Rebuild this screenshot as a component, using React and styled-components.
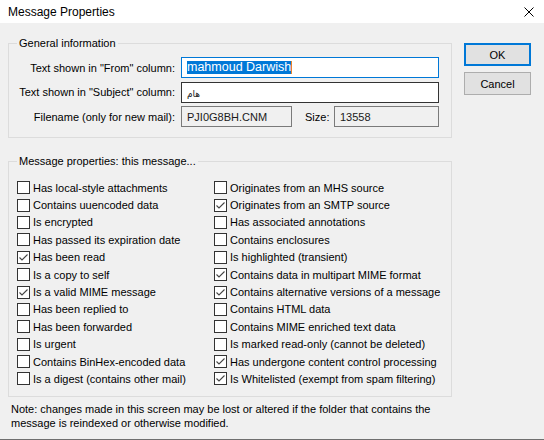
import React from 'react';
import styled, { createGlobalStyle } from 'styled-components';

const GlobalStyle = createGlobalStyle`
  html, body { margin: 0; padding: 0; background: #f0f0f0; }
  body {
    width: 544px;
    height: 440px;
    overflow: hidden;
    font-family: "Liberation Sans", Arial, sans-serif;
  }
`;

const Window = styled.div`
  width: 544px;
  height: 440px;
  box-sizing: border-box;
  display: flex;
  flex-direction: column;
  background: #f0f0f0;
  border-bottom: 1px solid #6f6f6f;
  color: #000;
  font-size: 11px;
  overflow: hidden;
`;

const TitleBar = styled.div`
  height: 23px;
  flex: none;
  background: #fff;
  display: flex;
  align-items: center;
  justify-content: space-between;
  padding: 0 10px 0 8px;
`;

const Title = styled.span`
  font-size: 12px;
  color: #000;
`;

const CloseGlyph = styled.svg`
  display: block;
  width: 10px;
  height: 10px;
`;

const Body = styled.div`
  display: flex;
  flex-direction: column;
  padding: 14px 13px 0 8px;
`;

const Content = styled.div`
  display: flex;
  align-items: flex-start;
  gap: 12px;
`;

const Groups = styled.div`
  width: 444px;
  display: flex;
  flex-direction: column;
  gap: 17px;
`;

const GroupBox = styled.fieldset`
  margin: 0;
  min-width: 0;
  border: 1px solid #dcdcdc;
  padding: ${(p) => p.$pad};
`;

const Caption = styled.legend`
  padding: 0 2px;
  margin-left: 0;
  line-height: 13px;
  font-size: 11px;
`;

const FieldGrid = styled.div`
  display: grid;
  grid-template-columns: 158px 258px;
  column-gap: 6px;
  row-gap: 3.5px;
  align-items: center;
`;

const FieldLabel = styled.span`
  text-align: right;
  white-space: nowrap;
`;

const TextBox = styled.div`
  width: ${(p) => p.$w || 'auto'};
  height: 21px;
  box-sizing: border-box;
  border: 1px solid ${(p) => (p.$focused ? '#0078d7' : p.$readOnly ? '#7a7a7a' : '#333')};
  background: ${(p) => (p.$readOnly ? '#f0f0f0' : '#fff')};
  display: flex;
  align-items: center;
  padding: 0 5px;
  white-space: nowrap;
  overflow: hidden;
  color: #1a1a1a;
`;

const Selected = styled.span`
  background: #0078d7;
  color: #fff;
  font-size: 12.5px;
  line-height: 13px;
  border-right: 1px solid #e8822a;
`;

const ArabicText = styled.span`
  font-family: "DejaVu Sans", "Noto Sans", sans-serif;
  font-size: 9px;
  padding-top: 3px;
`;

const FileRow = styled.div`
  display: flex;
  align-items: center;
`;

const SizeLabel = styled.span`
  margin-left: 13px;
`;

const Spacer = styled.div`
  flex: 1;
`;

const CheckGrid = styled.div`
  display: grid;
  grid-template-columns: 197px 1fr;
  grid-template-rows: repeat(12, 17.4px);
  grid-auto-flow: column;
`;

const CheckRow = styled.label`
  display: flex;
  align-items: center;
  gap: 3px;
  white-space: nowrap;
`;

const Box = styled.span`
  width: 13px;
  height: 13px;
  flex: none;
  box-sizing: border-box;
  border: 1px solid #333;
  background: #fff;
  display: flex;
  align-items: center;
  justify-content: center;
`;

const Tick = styled.svg`
  display: block;
  width: 11px;
  height: 11px;
`;

const ButtonColumn = styled.div`
  width: 67px;
  padding-top: 6px;
  display: flex;
  flex-direction: column;
  gap: 6px;
`;

const Button = styled.button`
  height: 23px;
  box-sizing: border-box;
  margin: 0;
  padding: 0;
  font-family: "Liberation Sans", Arial, sans-serif;
  font-size: 11px;
  color: #000;
  background: #e1e1e1;
  border: ${(p) => (p.$default ? '2px solid #0078d7' : '1px solid #adadad')};
`;

const Note = styled.p`
  margin: 5px 0 0 3px;
  line-height: 14px;
  font-size: 11px;
`;

const leftItems = [
  ['Has local-style attachments', false],
  ['Contains uuencoded data', false],
  ['Is encrypted', false],
  ['Has passed its expiration date', false],
  ['Has been read', true],
  ['Is a copy to self', false],
  ['Is a valid MIME message', true],
  ['Has been replied to', false],
  ['Has been forwarded', false],
  ['Is urgent', false],
  ['Contains BinHex-encoded data', false],
  ['Is a digest (contains other mail)', false],
];

const rightItems = [
  ['Originates from an MHS source', false],
  ['Originates from an SMTP source', true],
  ['Has associated annotations', false],
  ['Contains enclosures', false],
  ['Is highlighted (transient)', false],
  ['Contains data in multipart MIME format', true],
  ['Contains alternative versions of a message', true],
  ['Contains HTML data', false],
  ['Contains MIME enriched text data', false],
  ['Is marked read-only (cannot be deleted)', false],
  ['Has undergone content control processing', true],
  ['Is Whitelisted (exempt from spam filtering)', true],
];

function CheckItem({ text, checked }) {
  return (
    <CheckRow>
      <Box>
        {checked && (
          <Tick viewBox="0 0 11 11">
            <polyline points="1.5,5.5 4,8 9.5,2.5" fill="none" stroke="#444" strokeWidth="1.1" />
          </Tick>
        )}
      </Box>
      <span>{text}</span>
    </CheckRow>
  );
}

export default function App() {
  return (
    <>
      <GlobalStyle />
      <Window>
        <TitleBar>
          <Title>Message Properties</Title>
          <CloseGlyph viewBox="0 0 10 10">
            <path d="M0.5 0.5 L9.5 9.5 M9.5 0.5 L0.5 9.5" stroke="#000" strokeWidth="1" />
          </CloseGlyph>
        </TitleBar>
        <Body>
          <Content>
            <Groups>
              <GroupBox $pad="7px 12px 10px 8px">
                <Caption>General information</Caption>
                <FieldGrid>
                  <FieldLabel>Text shown in "From" column:</FieldLabel>
                  <TextBox $focused>
                    <Selected>mahmoud Darwish</Selected>
                  </TextBox>
                  <FieldLabel>Text shown in "Subject" column:</FieldLabel>
                  <TextBox>
                    <ArabicText>هام</ArabicText>
                  </TextBox>
                  <FieldLabel>Filename (only for new mail):</FieldLabel>
                  <FileRow>
                    <TextBox $readOnly $w="111px">PJI0G8BH.CNM</TextBox>
                    <SizeLabel>Size:</SizeLabel>
                    <Spacer />
                    <TextBox $readOnly $w="105px">13558</TextBox>
                  </FileRow>
                </FieldGrid>
              </GroupBox>
              <GroupBox $pad="11px 8px 8px 8px">
                <Caption>Message properties: this message...</Caption>
                <CheckGrid>
                  {leftItems.map(([t, c]) => (
                    <CheckItem key={t} text={t} checked={c} />
                  ))}
                  {rightItems.map(([t, c]) => (
                    <CheckItem key={t} text={t} checked={c} />
                  ))}
                </CheckGrid>
              </GroupBox>
            </Groups>
            <ButtonColumn>
              <Button $default>OK</Button>
              <Button>Cancel</Button>
            </ButtonColumn>
          </Content>
          <Note>
            Note: changes made in this screen may be lost or altered if the folder that contains the
            <br />
            message is reindexed or otherwise modified.
          </Note>
        </Body>
      </Window>
    </>
  );
}
